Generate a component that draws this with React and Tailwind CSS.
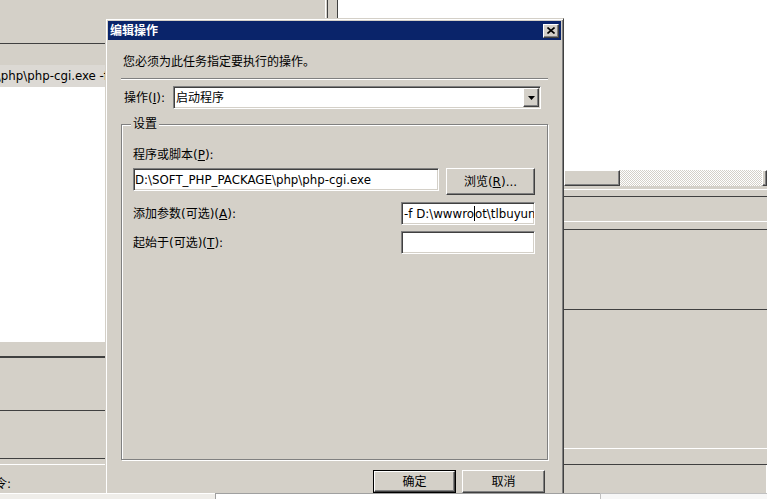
import React from 'react';

// classic win2k bevels
const sunken =
  'border border-t-[#808080] border-l-[#808080] border-r-white border-b-white shadow-[inset_1px_1px_0_#404040,inset_-1px_-1px_0_#d4d0c8] bg-white';
const raised =
  'border border-t-white border-l-white border-r-[#404040] border-b-[#404040] shadow-[inset_-1px_-1px_0_#808080] bg-[#d4d0c8]';
const mono = "font-['DejaVu_Sans','Noto_Sans_CJK_SC',sans-serif] text-[11.8px]";

const Field = ({ width, children, className = '' }) => (
  <div className={`${sunken} ${width} h-[23px] flex items-center overflow-hidden whitespace-nowrap ${className}`}>
    {children}
  </div>
);

const Button = ({ children, isDefault }) => (
  <div className={isDefault ? 'border border-black' : ''}>
    <div
      className={`${raised} ${isDefault ? 'w-[81px] h-[21px]' : 'w-[83px] h-[23px]'} flex items-center justify-center`}
    >
      {children}
    </div>
  </div>
);

const LeftPane = () => (
  <div className="absolute left-0 top-0 w-[107px] h-[493px] flex flex-col">
    <div className="h-[43px] shrink-0" />
    <div className="h-px bg-[#404040]" />
    <div className="h-[21px]" />
    <div className={`h-[22px] bg-[#dcd9d4] flex items-center justify-end overflow-hidden whitespace-nowrap ${mono}`}>
      <span className="mr-[-1px]">D:\SOFT_PHP_PACKAGE\php\php-cgi.exe -f</span>
    </div>
    <div className="h-[254px] bg-white border-r border-[#e6e4e0]" />
    <div className="h-px bg-white" />
    <div className="h-[14px]" />
    <div className="h-[2px] bg-[#404040]" />
    <div className="h-[52px]" />
    <div className="h-px bg-[#404040]" />
    <div className="h-[47px]" />
    <div className="h-px bg-[#404040]" />
    <div className="h-[5px]" />
    <div className="h-px bg-white" />
    <div className="flex-1 pt-[11px] overflow-hidden whitespace-nowrap">
      <span className="ml-[-17px]">命令:</span>
    </div>
  </div>
);

const TopBand = () => (
  <div className="absolute left-[107px] top-0 w-[457px] h-[18px] flex">
    <div className="w-[218px]" />
    <div className="w-px bg-white" />
    <div className="w-px" />
    <div className="w-px bg-[#404040]" />
    <div className="w-[9px]" />
    <div className="w-px bg-[#404040]" />
    <div className="flex-1 bg-white" />
  </div>
);

const RightPane = () => (
  <div className="absolute left-[564px] top-0 w-[203px] h-[493px] flex flex-col">
    <div className="h-[170px] bg-white shrink-0" />
    <div className="h-[16px] flex shrink-0">
      <div className={`${raised} w-[56px] h-full`} />
      <div className="flex-1 h-full bg-[repeating-conic-gradient(#ffffff_0%_25%,#d4d0c8_0%_50%)] bg-[length:2px_2px]" />
      <div className={`${raised} w-[5px] h-full`} />
    </div>
    <div className="h-[3px]" />
    <div className="h-px bg-white" />
    <div className="h-[6px]" />
    <div className="h-px bg-[#404040]" />
    <div className="h-[24px]" />
    <div className="h-px bg-white" />
    <div className="h-[7px]" />
    <div className="h-px bg-[#404040]" />
    <div className="h-[79px]" />
    <div className="h-px bg-[#404040]" />
    <div className="h-[138px]" />
    <div className="h-px bg-white" />
    <div className="h-[15px]" />
    <div className="h-px bg-[#404040]" />
    <div className="flex-1 border-r border-white" />
  </div>
);

const Dialog = () => (
  <div className="absolute left-[105px] top-[18px] w-[459px] h-[490px] bg-[#d4d0c8] border border-t-[#d4d0c8] border-l-[#d4d0c8] border-r-[#404040] border-b-[#404040] shadow-[inset_1px_1px_0_#ffffff,inset_-1px_-1px_0_#808080] p-[2px] flex flex-col">
    {/* title bar */}
    <div className="h-[19px] shrink-0 bg-[#0a246a] flex items-center justify-between pl-[2px] pr-[2px]">
      <span className="text-white font-bold">编辑操作</span>
      <div className={`${raised} w-[16px] h-[14px] flex items-center justify-center`}>
        <svg width="8" height="7" viewBox="0 0 8 7">
          <path d="M0.5 0.5 L7.5 6.5 M7.5 0.5 L0.5 6.5" stroke="#000" strokeWidth="1.6" fill="none" />
        </svg>
      </div>
    </div>

    <div className="flex flex-col px-[13px]">
      <div className="mt-[14px] ml-[2px] h-[16px]">您必须为此任务指定要执行的操作。</div>
      <div className="mt-[8px] h-[2px] border-t border-t-[#808080] border-b border-b-white" />

      <div className="mt-[6px] h-[23px] flex items-center">
        <span className="ml-[3px] w-[49px]">
          操作(<u>I</u>):
        </span>
        <div className={`${sunken} w-[368px] h-[23px] flex items-center pl-[2px] pr-px`}>
          <span>启动程序</span>
          <div className={`${raised} ml-auto w-[16px] h-[19px] flex items-center justify-center`}>
            <svg width="7" height="4" viewBox="0 0 7 4">
              <path d="M0 0 H7 L3.5 4 Z" fill="#000" />
            </svg>
          </div>
        </div>
      </div>

      <fieldset className="mt-[7px] m-0 min-w-0 h-[344px] border border-[#808080] shadow-[inset_1px_1px_0_#ffffff,1px_1px_0_#ffffff] pl-[9px] pr-[9px] pb-0 pt-0">
        <legend className="px-[2px] leading-[16px] bg-[#d4d0c8]">设置</legend>
        <div className="ml-[2px] flex flex-col">
          <div className="mt-[15px] h-[16px]">
            程序或脚本(<u>P</u>):
          </div>
          <div className="mt-[5px] w-[402px] flex items-start justify-between">
            <Field width="w-[306px]" className="pl-px">
              <span className={mono}>D:\SOFT_PHP_PACKAGE\php\php-cgi.exe</span>
            </Field>
            <div className={`${raised} w-[89px] h-[27px] flex items-center justify-center`}>
              浏览(<u>R</u>)...
            </div>
          </div>
          <div className="mt-[7px] w-[402px] h-[23px] flex items-center justify-between">
            <span>
              添加参数(可选)(<u>A</u>):
            </span>
            <Field width="w-[134px]" className="pl-[2px]">
              <span className={mono}>-f D:\wwwro</span>
              <span className="inline-block w-0 h-[15px] border-l border-black" />
              <span className={mono}>ot\tlbuyun\index.php</span>
            </Field>
          </div>
          <div className="mt-[6px] w-[402px] h-[23px] flex items-center justify-between">
            <span>
              起始于(可选)(<u>T</u>):
            </span>
            <Field width="w-[134px]" />
          </div>
        </div>
      </fieldset>

      <div className="mt-[10px] flex justify-end gap-[6px] pr-[3px]">
        <Button isDefault>确定</Button>
        <Button>取消</Button>
      </div>
    </div>
  </div>
);

const BottomStrip = () => (
  <div className="absolute left-0 top-[493px] w-[767px] h-[6px] flex">
    <div className="w-[215px] bg-[#efede9] border-t border-white" />
    <div className="w-[385px] bg-white border-t border-l border-[#a0a0a0]" />
    <div className="flex-1 bg-[#f7f7f7] border-t border-l border-[#c0c0c0]" />
  </div>
);

export default function App() {
  return (
    <div className="relative w-[767px] h-[499px] overflow-hidden bg-[#d4d0c8] text-black text-[12px] leading-[16px] font-['DejaVu_Sans','Noto_Sans_CJK_SC',sans-serif]">
      <LeftPane />
      <TopBand />
      <RightPane />
      <Dialog />
      <BottomStrip />
    </div>
  );
}
